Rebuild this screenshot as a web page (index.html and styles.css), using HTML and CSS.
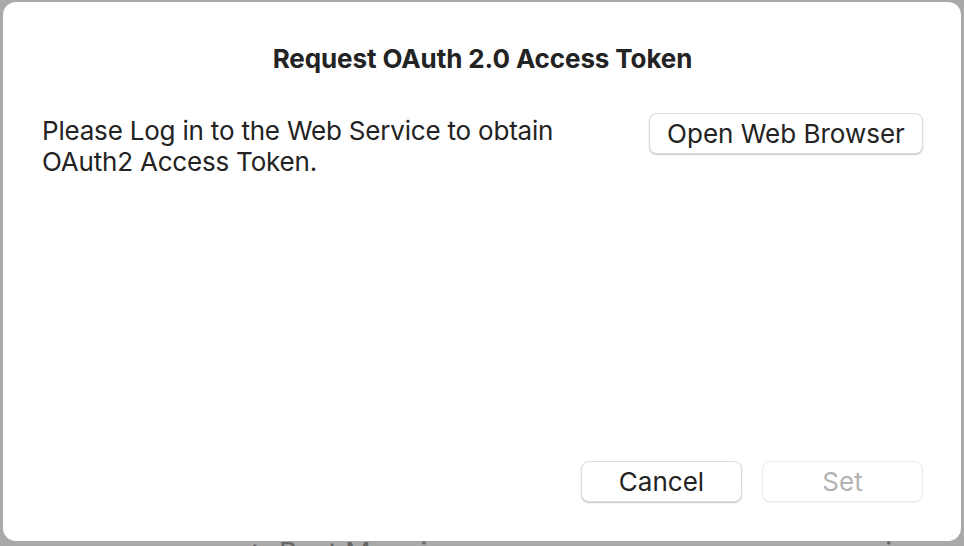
FILE: index.html
```html
<!DOCTYPE html>
<html>
<head>
<meta charset="utf-8">
<link rel="stylesheet" href="styles.css">
</head>
<body>
<div class="behind">
  <span class="behind-a">⇆ Post Mappings</span>
  <span class="behind-b">ping and</span>
</div>
<div class="dialog">
  <h1 class="title">Request OAuth 2.0 Access Token</h1>
  <div class="content">
    <p class="message">Please Log in to the Web Service to obtain<br>OAuth2 Access Token.</p>
    <button class="btn btn-open">Open Web Browser</button>
  </div>
  <div class="actions">
    <button class="btn btn-action">Cancel</button>
    <button class="btn btn-action btn-disabled">Set</button>
  </div>
</div>
</body>
</html>
```
FILE: styles.css
```css
html, body {
  margin: 0;
  padding: 0;
  height: 100%;
}
body {
  background: #a9a9a9;
  font-family: "Inter", "Roboto", "Liberation Sans", sans-serif;
  color: #232323;
  overflow: hidden;
  position: relative;
}
.behind {
  position: absolute;
  left: 0;
  right: 0;
  bottom: 0;
  height: 6px;
  overflow: hidden;
  font-size: 28px;
  line-height: 30px;
  color: #666666;
}
.behind-a {
  position: absolute;
  left: 248px;
  top: -2px;
}
.behind-b {
  position: absolute;
  left: 868px;
  top: -2px;
}
.dialog {
  position: relative;
  margin: 2px 3px 0 3px;
  height: 539px;
  box-sizing: border-box;
  background: #ffffff;
  border-radius: 13px;
  display: flex;
  flex-direction: column;
  padding: 43px 38px 39px 39px;
}
.title {
  margin: 0;
  font-size: 26px;
  font-weight: 700;
  line-height: 28px;
  text-align: center;
  letter-spacing: -0.1px;
}
.content {
  display: flex;
  justify-content: space-between;
  align-items: flex-start;
  margin-top: 42px;
  flex: 1;
}
.message {
  margin: 0;
  font-size: 26px;
  line-height: 31px;
  font-weight: 400;
  letter-spacing: -0.2px;
}
.btn {
  font-family: inherit;
  font-size: 26px;
  color: #232323;
  background: #ffffff;
  border: 1px solid #dcdcdc;
  border-radius: 8px;
  box-shadow: 0 1px 1.5px rgba(0, 0, 0, 0.22);
  padding: 0;
  height: 41px;
  line-height: 38px;
}
.btn-open {
  width: 274px;
  margin-top: -2px;
}
.actions {
  display: flex;
  justify-content: flex-end;
  gap: 20px;
}
.btn-action {
  width: 161px;
}
.btn-disabled {
  color: #b3b3b3;
  border-color: #ebebeb;
  box-shadow: 0 1px 1px rgba(0, 0, 0, 0.06);
}
```
